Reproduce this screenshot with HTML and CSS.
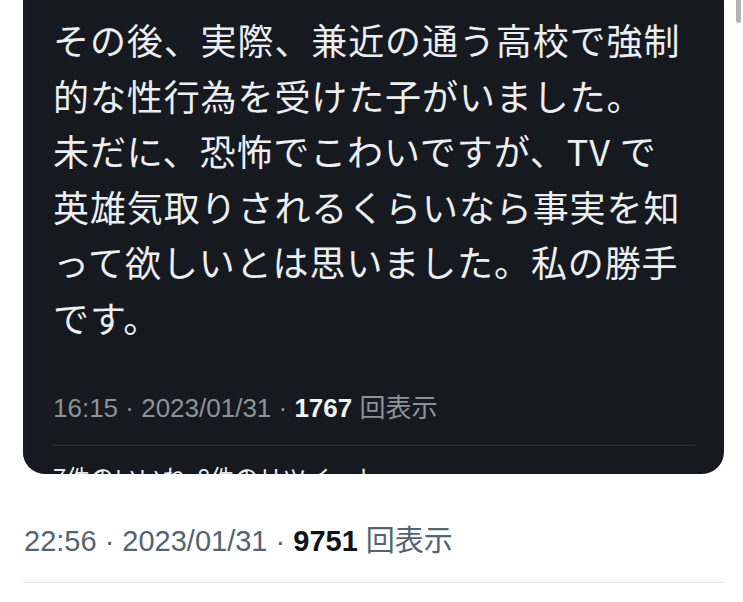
FILE: index.html
```html
<!DOCTYPE html>
<html lang="ja">
<head>
    <meta charset="UTF-8">
    <meta name="viewport" content="width=device-width, initial-scale=1.0">
    <title>ツイート</title>
    <link rel="stylesheet" href="styles.css">
</head>
<body>
    <div class="tweet">
        <div class="shot">
            <p class="shot-text">その後、実際、兼近の通う高校で強制的な性行為を受けた子がいました。<br>未だに、恐怖でこわいですが、TV で英雄気取りされるくらいなら事実を知って欲しいとは思いました。私の勝手です。</p>
            <div class="shot-meta">16:15 · 2023/01/31 · <b>1767</b> 回表示</div>
            <div class="shot-stats">7件のいいね&nbsp;&nbsp;8件のリツイート</div>
        </div>

        <div class="meta">22:56 · 2023/01/31 · <b>9751</b> 回表示</div>
    </div>

    <div class="scroll-thumb"></div>
</body>
</html>
```

FILE: styles.css
```css
body {
    margin: 0;
    background: #ffffff;
    overflow: hidden;
    font-family: "Liberation Sans", "Noto Sans CJK JP", sans-serif;
}

.tweet {
    padding: 0 19px 0 23px;
}

/* screenshot of a dark tweet, top is scrolled off */
.shot {
    margin-top: -20px;
    height: 494px;
    overflow: hidden;
    box-sizing: border-box;
    padding: 32px 29px 0 30px;
    background: #161920;
    border-radius: 22px;
    box-shadow: inset 8px 0 8px -4px #1d1a30;
}

.shot-text {
    margin: 0;
    max-width: 632px;
    font-family: "Noto Sans CJK JP", sans-serif;
    font-size: 36px;
    letter-spacing: 0.9px;
    line-height: 55.5px;
    color: #eceef0;
    line-break: loose;
}

.shot-meta {
    margin-top: 45px;
    padding-bottom: 19px;
    border-bottom: 1px solid #2c3037;
    font-size: 26px;
    line-height: 36px;
    color: #8e9298;
}

.shot-meta b {
    color: #f2f3f5;
}

.shot-stats {
    margin-top: 13px;
    font-family: "Noto Sans CJK JP", sans-serif;
    font-size: 24px;
    line-height: 36px;
    color: #e7e9ea;
}

.meta {
    margin-top: 47px;
    padding: 0 0 21px 1px;
    border-bottom: 1px solid #e2e5e7;
    font-size: 29px;
    line-height: 40px;
    color: #536471;
}

.meta b {
    color: #0f1419;
}

.scroll-thumb {
    position: absolute;
    top: 0;
    right: 2px;
    width: 5px;
    height: 23px;
    border-radius: 0 0 3px 3px;
    background: #b4b4b4;
}
```
